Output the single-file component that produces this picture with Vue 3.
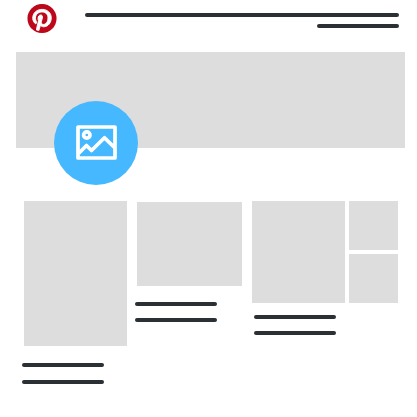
<script setup>
const boards = [
  { id: 'tall', tiles: 1 },
  { id: 'wide', tiles: 1 },
  { id: 'mosaic', tiles: 3 },
]
</script>

<template>
  <div class="page">
    <header class="header">
      <svg class="logo" viewBox="0 0 24 24" aria-hidden="true">
        <circle cx="12" cy="12" r="11.5" fill="#fff" />
        <path
          fill="#bd081c"
          stroke="#fff"
          stroke-width=".8"
          d="M12 0C5.373 0 0 5.372 0 12c0 5.084 3.163 9.426 7.627 11.174-.105-.949-.2-2.405.042-3.441.218-.937 1.407-5.965 1.407-5.965s-.359-.719-.359-1.782c0-1.668.967-2.914 2.171-2.914 1.023 0 1.518.769 1.518 1.69 0 1.029-.655 2.568-.994 3.995-.283 1.194.599 2.169 1.777 2.169 2.133 0 3.772-2.249 3.772-5.495 0-2.873-2.064-4.882-5.012-4.882-3.414 0-5.418 2.561-5.418 5.207 0 1.031.397 2.138.893 2.738a.36.36 0 0 1 .083.345l-.333 1.36c-.053.22-.174.267-.402.161-1.499-.698-2.436-2.889-2.436-4.649 0-3.785 2.75-7.262 7.929-7.262 4.163 0 7.398 2.967 7.398 6.931 0 4.136-2.607 7.464-6.227 7.464-1.216 0-2.359-.631-2.75-1.378l-.748 2.853c-.271 1.043-1.002 2.35-1.492 3.146C9.57 23.812 10.763 24 12 24c6.627 0 12-5.373 12-12 0-6.628-5.373-12-12-12z"
        />
        <circle cx="12" cy="12" r="11.4" fill="none" stroke="#bd081c" stroke-width="1.2" />
      </svg>
      <div class="header-lines">
        <span class="line line-full"></span>
        <span class="line"></span>
      </div>
    </header>

    <main>
      <section class="cover">
        <div class="avatar">
          <svg class="picture" viewBox="0 0 41 36" aria-hidden="true">
            <g fill="none" stroke="#fff" stroke-width="3.7" stroke-linejoin="round">
              <rect x="2" y="2" width="37" height="31" />
              <path d="M2.5 28.5 10.5 20.5 15.5 25.5 28.5 12.8 39 23" />
              <circle cx="10.8" cy="10" r="3.2" />
            </g>
          </svg>
        </div>
      </section>

      <section class="boards">
        <article v-for="board in boards" :key="board.id" class="board" :class="board.id">
          <div class="tiles">
            <div v-for="n in board.tiles" :key="n" class="tile"></div>
          </div>
          <div class="caption">
            <span class="line"></span>
            <span class="line"></span>
          </div>
        </article>
      </section>
    </main>
  </div>
</template>

<style>
body {
  margin: 0;
  background: #fff;
}
</style>

<style scoped>
.page {
  padding-top: 4px;
}

.header {
  display: flex;
  gap: 28px;
  padding: 0 18px 0 27px;
}

.logo {
  flex: none;
  width: 30px;
  height: 29px;
}

.header-lines {
  display: flex;
  flex: 1;
  flex-direction: column;
  align-items: flex-end;
  gap: 7px;
  padding-top: 9px;
}

.line {
  display: block;
  width: 82px;
  height: 4px;
  border-radius: 2px;
  background: #2b3035;
}

.line-full {
  width: 100%;
}

.cover {
  display: flex;
  align-items: flex-end;
  height: 96px;
  margin: 19px 12px 0 16px;
  padding-left: 38px;
  box-sizing: border-box;
  background: #ddd;
}

.avatar {
  display: flex;
  align-items: center;
  justify-content: center;
  width: 84px;
  height: 84px;
  margin-bottom: -37px;
  border-radius: 50%;
  background: #45b8ff;
}

.picture {
  width: 41px;
  height: 36px;
}

.boards {
  display: grid;
  grid-template-columns: 103fr 105fr 146fr;
  align-items: start;
  gap: 10px;
  padding: 53px 19px 24px 24px;
}

.tiles {
  display: grid;
  gap: 4px;
}

.tile {
  background: #ddd;
}

.tall .tile {
  aspect-ratio: 103 / 145;
}

.wide {
  padding-top: 1px;
}

.wide .tile {
  aspect-ratio: 105 / 84;
}

.mosaic .tiles {
  grid-template-columns: 93fr 49fr;
}

.mosaic .tile {
  aspect-ratio: 1;
}

.mosaic .tile:first-child {
  grid-row: span 2;
  aspect-ratio: auto;
}

.caption {
  display: grid;
  gap: 12px;
  margin: 16px 0 0 -2px;
}

.tall .caption {
  gap: 13px;
  margin-top: 17px;
}

.mosaic .caption {
  margin: 12px 0 0 2px;
}
</style>
